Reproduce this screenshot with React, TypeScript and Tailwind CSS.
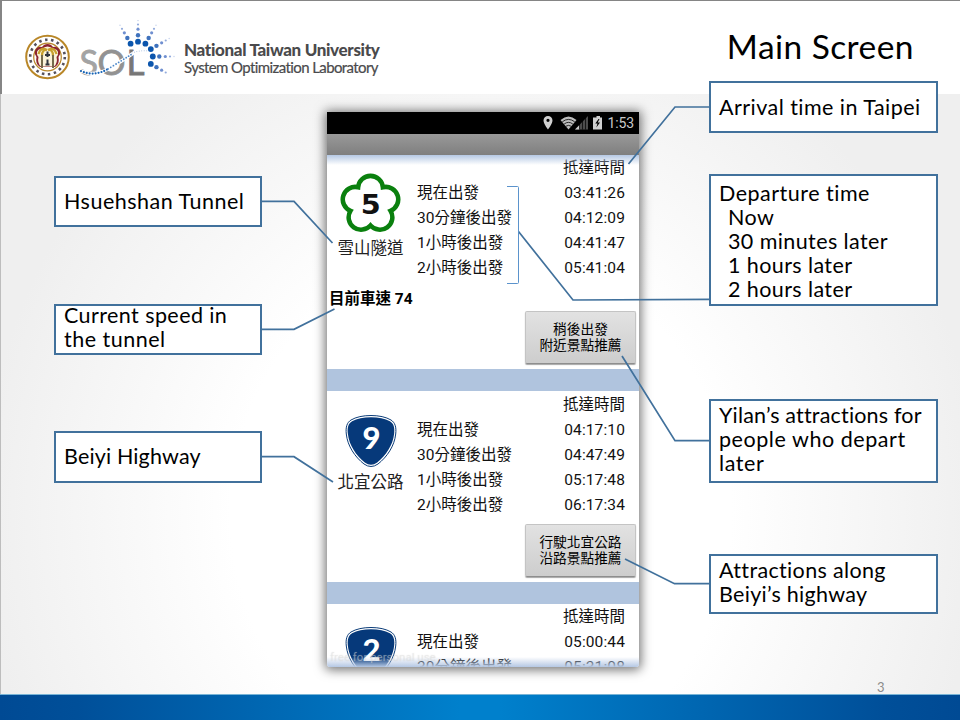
import type { ReactNode } from 'react';

type Departure = { label: string; time: string };

const TUNNEL: Departure[] = [
  { label: '現在出發', time: '03:41:26' },
  { label: '30分鐘後出發', time: '04:12:09' },
  { label: '1小時後出發', time: '04:41:47' },
  { label: '2小時後出發', time: '05:41:04' },
];

const BEIYI: Departure[] = [
  { label: '現在出發', time: '04:17:10' },
  { label: '30分鐘後出發', time: '04:47:49' },
  { label: '1小時後出發', time: '05:17:48' },
  { label: '2小時後出發', time: '06:17:34' },
];

const COAST: Departure[] = [
  { label: '現在出發', time: '05:00:44' },
  { label: '30分鐘後出發', time: '05:31:08' },
];

// rays of the lab logo, in degrees clockwise from the top
const RAYS = [
  { angle: -30, n: 5 },
  { angle: 0, n: 5 },
  { angle: 30, n: 5 },
  { angle: 60, n: 5 },
  { angle: 90, n: 5 },
  { angle: 120, n: 4 },
];
const DOT_DIST = [14.8, 21.3, 27.3, 32, 36];
const DOT_SIZE = [2.9, 2.2, 1.6, 1.1, 0.7];
const DOT_FILL = ['#0c56ad', '#3f72bd', '#6f8fd0', '#93abdc', '#c3d0ec'];

export default function App() {
  return (
    <div className="relative flex h-[720px] w-[960px] flex-col overflow-hidden bg-white font-['Lato','Noto_Sans_CJK_TC',sans-serif] text-black">
      <header className="flex h-[94px] shrink-0 items-start justify-between border-t border-l-2 border-[#858585] bg-white pr-[46px] pl-[22px]">
        <div className="flex pt-[19px]">
          <Logo />
          <div className="pt-[20px] whitespace-nowrap text-[#4a4a4c]">
            <div className="text-[17px] leading-[20px] font-black tracking-[-0.33px]">National Taiwan University</div>
            <div className="text-[15px] leading-[14px] tracking-[-0.6px] [-webkit-text-stroke:0.2px_#4a4a4c]">System Optimization Laboratory</div>
          </div>
        </div>
        <h1 className="pt-[25px] text-[33.5px] leading-[40px] tracking-[0.45px] whitespace-nowrap">Main Screen</h1>
      </header>

      <main className="flex h-[600px] shrink-0 items-start border-l border-[#bdbdbd] bg-[radial-gradient(ellipse_500px_530px_at_480px_420px,#fff_50%,#efefef_100%)] pl-[53px]">
        <div className="mt-[82px] flex w-[208px] flex-col">
          <Callout className="h-[51px] pb-[2px]">
            <p className="tracking-[0.5px]">Hsuehshan Tunnel</p>
          </Callout>
          <Callout className="mt-[77px] h-[51px] pb-[6px]">
            <p className="tracking-[0.42px]">Current speed in</p>
            <p className="tracking-[0.5px]">the tunnel</p>
          </Callout>
          <Callout className="mt-[76px] h-[52px] pb-[2px]">
            <p className="tracking-[0.15px]">Beiyi Highway</p>
          </Callout>
        </div>

        <Phone />

        <div className="mt-[-13px] ml-[70px] flex w-[229px] flex-col">
          <Callout className="h-[52px]">
            <p className="tracking-[0.46px]">Arrival time in Taipei</p>
          </Callout>
          <Callout className="mt-[41px] h-[132px] pt-[1px]">
            <p className="tracking-[0.5px]">Departure time</p>
            <ul className="pl-[9px] tracking-[0.4px]">
              <li>Now</li>
              <li>30 minutes later</li>
              <li>1 hours later</li>
              <li>2 hours later</li>
            </ul>
          </Callout>
          <Callout className="mt-[93px] h-[84px] pb-[5px]">
            <p className="tracking-[0.18px]">Yilan’s attractions for</p>
            <p className="tracking-[0.55px]">people who depart</p>
            <p className="tracking-[0.6px]">later</p>
          </Callout>
          <Callout className="mt-[71px] h-[60px] pb-[5px]">
            <p className="tracking-[0.35px]">Attractions along</p>
            <p className="tracking-[0.3px]">Beiyi’s highway</p>
          </Callout>
          <span className="mt-[65px] ml-[168px] text-[13px] leading-[16px] text-[#8b8b8b]">3</span>
        </div>
      </main>

      <footer className="h-[26px] shrink-0 border-t border-[#78b4d6] bg-[linear-gradient(90deg,#004a94_0%,#004f99_8%,#0080cc_48%,#0080cc_52%,#004f99_92%,#004a94_100%)]" />

      <Connectors />
    </div>
  );
}

function Callout({ className, children }: { className: string; children: ReactNode }) {
  return (
    <div className={`flex shrink-0 flex-col justify-center border-2 border-[#41719c] bg-white pl-2 text-[21.5px] leading-[24px] whitespace-nowrap ${className}`}>
      {children}
    </div>
  );
}

function Phone() {
  return (
    <div className="relative mt-[18px] ml-[65px] flex h-[555px] w-[312px] shrink-0 flex-col overflow-hidden rounded-b-[3px] bg-white font-['Roboto','Noto_Sans_CJK_TC',sans-serif] shadow-[0_1px_11px_2px_rgba(0,0,0,0.55)]">
      <div className="flex h-[22px] shrink-0 items-center justify-end bg-black pr-[5px] text-[#c9c9c9]">
        <StatusIcons />
        <span className="text-[14px] leading-[22px] tracking-[-0.1px]">1:53</span>
      </div>
      <div className="h-[21px] shrink-0 bg-linear-to-b from-[#999] to-[#7f7f7f]" />

      <div className="relative flex shrink-0 flex-col">
        <div className="absolute inset-x-0 top-0 h-[10px] bg-linear-to-b from-[#b5c8e4] to-white/0" />
        <Section icon={<TunnelSign />} name="雪山隧道" rows={TUNNEL} className="h-[131px] pt-[1px]" />
        <p className="h-[25px] pt-[1px] pl-[2px] text-[15.5px] leading-[25px] font-bold">目前車速 74</p>
        <div className="flex h-[58px] justify-end pr-[3px]">
          <PlaceButton lines={['稍後出發', '附近景點推薦']} />
        </div>
      </div>

      <Divider />
      <Section icon={<Shield label="9" />} name="北宜公路" rows={BEIYI} className="h-[133px] pt-[2px]" />
      <div className="flex h-[58px] shrink-0 justify-end pr-[3px]">
        <PlaceButton lines={['行駛北宜公路', '沿路景點推薦']} />
      </div>

      <Divider />
      <Section icon={<Shield label="2" />} name="" rows={COAST} className="h-[100px] pt-[1px]" />

      <div className="absolute inset-x-0 bottom-0 h-[10px] bg-linear-to-b from-white/0 to-[#b5c8e4]" />
      <span className="absolute bottom-[2px] left-[3px] text-[11.5px] leading-[16px] whitespace-nowrap text-white/30 [text-shadow:0_0_1px_rgba(170,170,170,0.45)]">
        free for personal use
      </span>
    </div>
  );
}

function Section({ icon, name, rows, className }: {
  icon: ReactNode;
  name: string;
  rows: Departure[];
  className: string;
}) {
  return (
    <section className={`flex shrink-0 ${className}`}>
      <div className="flex w-[87px] flex-col items-center pt-[16px]">
        {icon}
        <span className="pt-[1px] text-[16.5px] leading-[20px] text-[#222]">{name}</span>
      </div>
      <div className="flex flex-1 flex-col pr-[14px] pl-[3px] text-[15.5px] leading-[25px] text-[#111]">
        <div className="text-right">抵達時間</div>
        {rows.map((row) => (
          <div key={row.label} className="flex justify-between">
            <span>{row.label}</span>
            <span className="tracking-[0.12px]">{row.time}</span>
          </div>
        ))}
      </div>
    </section>
  );
}

function Divider() {
  return <div className="h-[22px] shrink-0 bg-[#b0c4de]" />;
}

function PlaceButton({ lines }: { lines: string[] }) {
  return (
    <button
      type="button"
      className="flex h-[53px] w-[111px] flex-col items-center justify-center rounded-[2px] border border-[#c4c4c4] border-b-[#8e8e8e] bg-linear-to-b from-[#e2e2e2] to-[#cdcdcd] pb-[2px] text-[13.7px] leading-[16px] shadow-[0_1px_1px_rgba(0,0,0,0.35)]"
    >
      {lines.map((line) => <span key={line}>{line}</span>)}
    </button>
  );
}

function TunnelSign() {
  return (
    <svg width="62" height="66" viewBox="-30.5 -32 62 66" className="shrink-0">
      <path
        transform="translate(0 .3) scale(1.08)"
        d="M-11.46-15.78A11.5 11.5 0 0 1 11.46-15.78A11.5 11.5 0 0 1 18.55 6.03A11.5 11.5 0 0 1 0 19.5A11.5 11.5 0 0 1-18.55 6.03A11.5 11.5 0 0 1-11.46-15.78Z"
        fill="#fff"
        stroke="#0a800e"
        strokeWidth="4.200"
      />
      <text
        x="-9.800"
        y="10"
        fontFamily="DejaVu Sans"
        fontWeight="700"
        fontSize="26"
        fill="#111"
        textLength="20"
        lengthAdjust="spacingAndGlyphs"
      >
        5
      </text>
    </svg>
  );
}

function Shield({ label }: { label: string }) {
  return (
    <svg width="54" height="63" viewBox="0 0 54 63" className="shrink-0">
      <path
        d="M27 6.500C35 6.500 42 8 47 11C51 13.500 52.500 18 51.700 25C50.500 37 43 48 34 55Q27 60 20 55C11 48 3.500 37 2.300 25C1.500 18 3 13.500 7 11C12 8 19 6.500 27 6.500Z"
        fill="#fff"
        stroke="#0b3c78"
        strokeWidth="1"
      />
      <path
        d="M27 8.200C34.500 8.200 41 9.500 45.900 12.200C49.700 14.500 50.900 18.500 50.100 25C49 36 41.700 46.700 33.200 53.500Q27 58 20.800 53.500C12.300 46.700 5 36 3.900 25C3.100 18.500 4.300 14.500 8.100 12.200C13 9.500 19.500 8.200 27 8.200Z"
        fill="#06397a"
      />
      <text x="27.500" y="40" textAnchor="middle" fontFamily="Lato" fontWeight="900" fontSize="31" fill="#fff">{label}</text>
    </svg>
  );
}

function StatusIcons() {
  return (
    <svg width="68" height="18" viewBox="0 0 68 18" className="mr-[1px]">
      {/* location pin */}
      <path fillRule="evenodd" d="M10 2a4.500 4.500 0 0 0-4.500 4.500C5.500 9.500 10 15.500 10 15.500s4.500-6 4.500-9A4.500 4.500 0 0 0 10 2Zm0 2.700a1.600 1.600 0 1 1 0 3.200a1.600 1.600 0 0 1 0-3.200Z" fill="#d0d0d0" />
      {/* wifi */}
      <path d="M22.500 6Q30.500 -1 38.500 6L30.500 15.500Z" fill="#bdbdbd" />
      <path d="M24.300 7.800Q30.500 3 36.700 7.800M26.200 10Q30.500 6.700 34.800 10M28 12.200Q30.500 10.500 33 12.200" fill="none" stroke="#000" strokeWidth=".8" />
      {/* cell signal */}
      <path d="M37 15.500H50V2Z" fill="#4c4c4c" />
      <path d="M37 15.500H41.500V11Z" fill="#c9c9c9" />
      <path d="M41.500 2V15.500M44.500 2V15.500M47.500 2V15.500" stroke="#000" strokeWidth=".7" />
      {/* charging battery */}
      <path d="M57 3.500H58.500V2H62V3.500H64V15.500H55V3.500Z" fill="#d0d0d0" />
      <path d="M60.500 5L57.300 9.500H59.500L58.300 13.500L62 8.600H59.700L61.500 5Z" fill="#000" />
    </svg>
  );
}

function Logo() {
  return (
    <svg width="160" height="66" viewBox="24 20 160 66" className="shrink-0">
      {/* university seal */}
      <circle cx="47.500" cy="57" r="21.300" fill="#fff" stroke="#b98728" strokeWidth="2" />
      <circle cx="47.500" cy="57" r="17.300" fill="none" stroke="#55515c" strokeWidth="2.600" strokeDasharray="2.500 3.540" />
      <circle cx="47.500" cy="57" r="13.800" fill="#fff" stroke="#b98728" strokeWidth="1.200" />
      <path d="M47.500 44Q51 44 53 47Q58 46 60 51Q61 54 58.500 57Q60 64 55 67H40Q35 64 36.500 57Q34 54 35 51Q37 46 42 47Q44 44 47.500 44Z" fill="#8c2430" />
      <path d="M47.500 46.500Q51 46.500 52.500 49Q57 48.500 58 52Q58.500 55 56.500 57Q58 63 54 66.500H41Q37 63 38.500 57Q36.500 55 37 52Q38 48.500 42.500 49Q44 46.500 47.500 46.500Z" fill="#faf3da" />
      <path d="M47 50Q41 46 38.500 54M47 50Q42 49 42 56M48 50Q54 46 56.500 54M48 50Q53 49 53 56" fill="none" stroke="#c7a02e" strokeWidth="2.200" />
      <path d="M42 55V68M53 55V68" stroke="#756b4c" strokeWidth="2" />
      <path d="M47.500 51.500V57M45 55H50M47.500 59.500V65M45.500 64.500H49.500" stroke="#303640" strokeWidth="2" />

      {/* SOL wordmark */}
      <text x="79.500" y="74.500" fontFamily="Lato" fontSize="34" fill="#a3a3a3" stroke="#a3a3a3" strokeWidth=".8" textLength="18.500" lengthAdjust="spacingAndGlyphs">S</text>
      <text x="97.500" y="74.500" fontFamily="Lato" fontSize="34" fill="#929292" stroke="#929292" strokeWidth=".8" textLength="28" lengthAdjust="spacingAndGlyphs">O</text>
      <text x="126.500" y="74.500" fontFamily="Lato" fontSize="34" fill="#777" stroke="#777" strokeWidth=".8" textLength="18" lengthAdjust="spacingAndGlyphs">L</text>
      <path d="M81 71Q94 77 108 69T132 54T148 51" fill="none" stroke="#fff" strokeWidth="3.400" />
      <path d="M81 71Q94 77 108 69" fill="none" stroke="#1764b5" strokeWidth="2.200" strokeLinecap="round" strokeDasharray="0 3" />
      <path d="M108 69Q121 61 132 54" fill="none" stroke="#4c87c9" strokeWidth="1.800" strokeLinecap="round" strokeDasharray="0 3" />
      <path d="M132 53Q140 50 149 51" fill="none" stroke="#9fb9de" strokeWidth="1" strokeLinecap="round" strokeDasharray="0 2.500" />

      {RAYS.map((ray) =>
        DOT_DIST.slice(0, ray.n).map((dist, i) => {
          const rad = (ray.angle * Math.PI) / 180;
          return (
            <circle
              key={`${ray.angle}-${dist}`}
              cx={138 + dist * Math.sin(rad)}
              cy={56.5 - dist * Math.cos(rad)}
              r={DOT_SIZE[i]}
              fill={DOT_FILL[i]}
            />
          );
        })
      )}
    </svg>
  );
}

// leader lines between the callouts and the phone screen
function Connectors() {
  return (
    <svg width="960" height="720" viewBox="0 0 960 720" fill="none" className="pointer-events-none absolute inset-0">
      <g stroke="#41719c" strokeWidth="1.700">
        <path d="M261 201.300H294L332.500 243" />
        <path d="M261 329.300H294L334.500 309" />
        <path d="M261 456.700H294L333 482" />
        <path d="M710 107H675L628.500 164" />
        <path d="M710 299.300L573 300L518.500 231.500" />
        <path d="M710 440.700H675L622 356" />
        <path d="M710 583.700H674.500L625 559" />
      </g>
      <path d="M507 186.500H517.500Q518.500 186.500 518.500 187.500V282.500Q518.500 283.500 517.500 283.500H507" stroke="#5b93cc" />
    </svg>
  );
}
